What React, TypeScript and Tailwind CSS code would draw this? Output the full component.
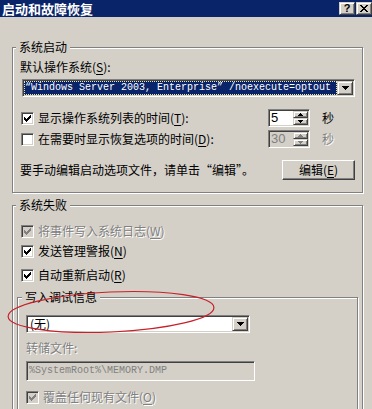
import type { ReactNode } from "react";

const sunken =
  "border border-t-[#808080] border-l-[#808080] border-b-white border-r-white shadow-[inset_1px_1px_0_#404040,inset_-1px_-1px_0_#d4d0c8]";
const raised =
  "border border-t-[#d4d0c8] border-l-[#d4d0c8] border-b-[#404040] border-r-[#404040] shadow-[inset_1px_1px_0_#fff,inset_-1px_-1px_0_#808080] bg-[#d4d0c8]";
const greyText = "text-[#808080] [text-shadow:1px_1px_0_#fff]";

// classic 7x7 check mark, row by row
const checkRows: [number, number, number][] = [
  [6, 0, 1],
  [5, 1, 2],
  [0, 2, 1],
  [4, 2, 3],
  [0, 3, 2],
  [3, 3, 3],
  [0, 4, 5],
  [1, 5, 3],
  [2, 6, 1],
];

function Check({ checked, disabled, className = "" }: { checked?: boolean; disabled?: boolean; className?: string }) {
  return (
    <span
      className={`w-[13px] h-[13px] shrink-0 flex items-center justify-center ${sunken} ${
        disabled ? "bg-[#d4d0c8]" : "bg-white"
      } ${className}`}
    >
      {checked && (
        <svg width="7" height="7" viewBox="0 0 7 7" shapeRendering="crispEdges">
          {checkRows.map(([x, y, w], i) => (
            <rect key={i} x={x} y={y} width={w} height={1} fill={disabled ? "#808080" : "#000"} />
          ))}
        </svg>
      )}
    </span>
  );
}

function DownArrow() {
  return (
    <svg width="7" height="4" viewBox="0 0 7 4" shapeRendering="crispEdges">
      <path d="M0 0h7v1h-1v1h-1v1h-1v1h-1v-1h-1v-1h-1v-1h-1z" fill="#000" />
    </svg>
  );
}

function Combo({ children, className = "" }: { children: ReactNode; className?: string }) {
  return (
    <div className={`flex bg-white ${sunken} p-[1px] ${className}`}>
      <div className="flex-1 min-w-0 flex items-center">{children}</div>
      <div className={`w-[16px] flex items-center justify-center ${raised}`}>
        <DownArrow />
      </div>
    </div>
  );
}

function SpinBtn({ up, disabled }: { up?: boolean; disabled?: boolean }) {
  const fill = disabled ? "#808080" : "#000";
  return (
    <div className={`h-[7px] flex items-center justify-center ${raised}`}>
      <svg width="5" height="3" viewBox="0 0 5 3" shapeRendering="crispEdges">
        {up ? (
          <path d="M2 0h1v1h1v1h1v1h-5v-1h1v-1h1z" fill={fill} />
        ) : (
          <path d="M0 0h5v1h-1v1h-1v1h-1v-1h-1v-1h-1z" fill={fill} />
        )}
      </svg>
    </div>
  );
}

function Spin({ value, disabled }: { value: string; disabled?: boolean }) {
  return (
    <div className={`w-[42px] h-[18px] shrink-0 flex p-[1px] ${sunken} ${disabled ? "bg-[#d4d0c8]" : "bg-white"}`}>
      <span
        className={`flex-1 pl-[1px] text-[13px] leading-[14px] font-['Liberation_Sans',sans-serif] ${
          disabled ? "text-[#808080]" : "text-black"
        }`}
      >
        {value}
      </span>
      <div className="w-[15px] flex flex-col">
        <SpinBtn up disabled={disabled} />
        <SpinBtn disabled={disabled} />
      </div>
    </div>
  );
}

function Group({ label, labelLeft, className = "", children }: { label: string; labelLeft: string; className?: string; children: ReactNode }) {
  return (
    <div className={`relative border border-[#808080] shadow-[inset_1px_1px_0_#fff,1px_1px_0_#fff] ${className}`}>
      <span className={`absolute top-[-9px] ${labelLeft} px-[3px] bg-[#d4d0c8] leading-[16px]`}>{label}</span>
      {children}
    </div>
  );
}

function U({ c }: { c: string }) {
  return <span className="underline underline-offset-[2px]">{c}</span>;
}

export default function App() {
  return (
    <div className="w-[372px] h-[409px] overflow-hidden relative flex flex-col bg-[#d4d0c8] text-black text-[12px] leading-[16px] font-['Noto_Sans_CJK_SC','Liberation_Sans',sans-serif]">
      {/* title bar */}
      <div className="h-[17px] shrink-0 bg-[#0a246a] flex items-start pl-[2px]">
        <span className="text-white font-bold text-[13px] leading-[17px]">启动和故障恢复</span>
        <div className="ml-auto flex gap-[1px] pt-[2px]">
          <div className={`w-[16px] h-[13px] flex items-center justify-center ${raised}`}>
            <span className="font-['Liberation_Sans',sans-serif] font-bold text-[11px] leading-[11px]">?</span>
          </div>
          <div className={`w-[16px] h-[13px] flex items-center justify-center ${raised}`}>
            <svg width="8" height="7" viewBox="0 0 8 7" shapeRendering="crispEdges">
              <path d="M0 0h2v1h1v1h2v-1h1v-1h2v1h-1v1h-1v1h-1v1h1v1h1v1h1v1h-2v-1h-1v-1h-2v1h-1v1h-2v-1h1v-1h1v-1h1v-1h-1v-1h-1v-1h-1z" fill="#000" />
            </svg>
          </div>
        </div>
      </div>

      <div className="flex flex-col pl-[12px]">
        {/* 系统启动 */}
        <Group label="系统启动" labelLeft="left-[3px]" className="mt-[30px] w-[351px]">
          <div className="flex flex-col pl-[7px] pb-[12px]">
            <div className="mt-[11px] h-[16px]">
              默认操作系统(<U c="S" />):
            </div>
            <Combo className="mt-[4px] ml-[2px] w-[333px] h-[18px]">
              <div className="h-full w-full bg-[#0a246a] outline-1 outline-dotted outline-[#e8e8a0] -outline-offset-1 flex items-center pl-[1px] text-white text-[10px] leading-[12px] font-['Liberation_Mono',monospace] whitespace-nowrap overflow-hidden">
                “Windows Server 2003, Enterprise” /noexecute=optout
              </div>
            </Combo>
            <div className="mt-[12px] h-[18px] flex items-center">
              <Check checked className="ml-[1px]" />
              <span className="ml-[4px] w-[230px] shrink-0">
                显示操作系统列表的时间(<U c="T" />):
              </span>
              <Spin value="5" />
              <span className="ml-[12px]">秒</span>
            </div>
            <div className="mt-[3px] h-[18px] flex items-center">
              <Check className="ml-[1px]" />
              <span className="ml-[4px] w-[230px] shrink-0">
                在需要时显示恢复选项的时间(<U c="D" />):
              </span>
              <Spin value="30" disabled />
              <span className={`ml-[12px] ${greyText}`}>秒</span>
            </div>
            <div className="mt-[12px] h-[20px] flex items-center">
              <span className="w-[262px] shrink-0">要手动编辑启动选项文件，请单击“编辑”。</span>
              <div className="w-[73px] h-[20px] flex items-center justify-center bg-[#d4d0c8] border border-t-white border-l-white border-b-[#404040] border-r-[#404040] shadow-[inset_-1px_-1px_0_#808080]">
                编辑(<U c="E" />)
              </div>
            </div>
          </div>
        </Group>

        {/* 系统失败 */}
        <Group label="系统失败" labelLeft="left-[3px]" className="mt-[12px] w-[351px]">
          <div className="flex flex-col pl-[4px] pb-[20px]">
            <div className={`mt-[17px] h-[16px] flex items-center ${greyText}`}>
              <Check checked disabled className="ml-[4px]" />
              <span className="ml-[4px]">
                将事件写入系统日志(<U c="W" />)
              </span>
            </div>
            <div className="mt-[4px] h-[16px] flex items-center">
              <Check checked className="ml-[4px]" />
              <span className="ml-[4px]">
                发送管理警报(<U c="N" />)
              </span>
            </div>
            <div className="mt-[8px] h-[16px] flex items-center">
              <Check checked className="ml-[4px]" />
              <span className="ml-[4px]">
                自动重新启动(<U c="R" />)
              </span>
            </div>

            <Group label="写入调试信息" labelLeft="left-[4px]" className="mt-[14px] w-[341px]">
              <div className="flex flex-col pl-[8px] pb-[10px]">
                <Combo className="mt-[17px] w-[224px] h-[18px]">
                  <span className="pl-[2px]">(无)</span>
                </Combo>
                <div className={`mt-[7px] h-[16px] ${greyText}`}>转储文件:</div>
                <div
                  className={`mt-[5px] w-[229px] h-[20px] flex items-center pl-[2px] bg-[#d4d0c8] ${sunken} text-[#808080] text-[10px] font-['Liberation_Mono',monospace]`}
                >
                  %SystemRoot%\MEMORY.DMP
                </div>
                <div className={`mt-[8px] h-[16px] flex items-center ${greyText}`}>
                  <Check checked disabled />
                  <span className="ml-[4px]">
                    覆盖任何现有文件(<U c="O" />)
                  </span>
                </div>
              </div>
            </Group>
          </div>
        </Group>
      </div>

      {/* red annotation ellipse */}
      <svg className="absolute left-0 top-[285px] pointer-events-none" width="224" height="56" viewBox="0 0 224 56">
        <ellipse cx="111" cy="27" rx="103" ry="20" transform="rotate(-2.5 111 27)" fill="none" stroke="#c8202a" strokeWidth="1.2" />
      </svg>
    </div>
  );
}
